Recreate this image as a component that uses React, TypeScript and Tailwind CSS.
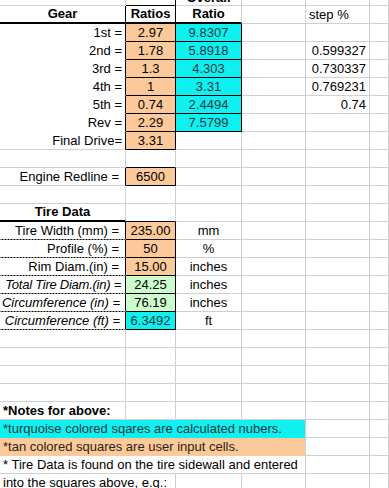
import type { ReactNode } from "react";

// right / bottom border variants for one sheet cell
const RB: Record<string, string> = {
  g: "border-r border-r-[#d0d0d0]",
  k: "border-r border-r-black",
};
const BB: Record<string, string> = {
  g: "border-b border-b-[#d0d0d0]",
  k: "border-b border-b-black",
  K: "border-b-2 border-b-black",
  n: "border-b border-b-transparent",
  d: "border-b border-b-transparent bg-[linear-gradient(90deg,#000_2px,transparent_2px)] bg-[length:3px_1px] bg-bottom bg-repeat-x bg-origin-border",
};

const TAN = "bg-[#fcca9a]";
const TURQ = "bg-[#10f0f0] text-[#17393d]";
const GREEN = "bg-[#cdfccd]";

function Cell({ r = "g", b = "g", c = "", children }: { r?: string; b?: string; c?: string; children?: ReactNode }) {
  return (
    <div className={`${RB[r]} ${BB[b]} flex items-center whitespace-nowrap px-[3px] min-w-0 ${c}`}>
      {children}
    </div>
  );
}

function Empty({ bB = "g" }: { bB?: string }) {
  return (
    <>
      <Cell />
      <Cell b={bB} />
      <Cell />
      <Cell />
      <Cell />
      <Cell />
    </>
  );
}

const GEARS = [
  { name: "1st =", ratio: "2.97", overall: "9.8307", step: "" },
  { name: "2nd =", ratio: "1.78", overall: "5.8918", step: "0.599327" },
  { name: "3rd =", ratio: "1.3", overall: "4.303", step: "0.730337" },
  { name: "4th =", ratio: "1", overall: "3.31", step: "0.769231" },
  { name: "5th =", ratio: "0.74", overall: "2.4494", step: "0.74" },
  { name: "Rev =", ratio: "2.29", overall: "7.5799", step: "" },
];

const TIRE = [
  { label: "Tire Width (mm) =", value: "235.00", unit: "mm", fill: TAN, lc: "pr-[6px]" },
  { label: "Profile (%) =", value: "50", unit: "%", fill: TAN, lc: "pr-[6px]" },
  { label: "Rim Diam.(in) =", value: "15.00", unit: "inches", fill: TAN, lc: "pr-[6px]" },
  { label: "Total Tire Diam.(in) =", value: "24.25", unit: "inches", fill: GREEN, lc: "italic pr-[4px] tracking-[-0.25px]" },
  { label: "Circumference (in) =", value: "76.19", unit: "inches", fill: GREEN, lc: "italic pr-[5px]" },
  { label: "Circumference (ft) =", value: "6.3492", unit: "ft", fill: TURQ, lc: "italic pr-[5px]" },
];

export default function App() {
  return (
    <div className="w-[389px] h-[488px] overflow-hidden bg-white text-[13px] text-black font-['Liberation_Sans',Arial,sans-serif]">
      <div className="grid grid-cols-[126px_50px_66px_64px_64px_1fr] grid-rows-[6px_repeat(27,18px)]">
        {/* row cut off at the top */}
        <Cell />
        <Cell r="k" b="k" />
        <Cell c="items-start justify-center overflow-hidden">
          <span className="-mt-[10px] leading-[15px] font-bold">Overall</span>
        </Cell>
        <Cell />
        <Cell />
        <Cell />

        {/* header */}
        <Cell r="k" b="K" c="justify-center font-bold">Gear</Cell>
        <Cell r="k" b="K" c="justify-center font-bold">Ratios</Cell>
        <Cell b="K" c="justify-center font-bold">Ratio</Cell>
        <Cell />
        <Cell>step %</Cell>
        <Cell />

        {GEARS.map((g) => (
          <>
            <Cell key={g.name} r="k" b="n" c="justify-end">{g.name}</Cell>
            <Cell r="k" b="k" c={`justify-center ${TAN}`}>{g.ratio}</Cell>
            <Cell r="k" b="k" c={`justify-center ${TURQ}`}>{g.overall}</Cell>
            <Cell />
            <Cell c="justify-end">{g.step}</Cell>
            <Cell />
          </>
        ))}

        <Cell r="k" c="justify-end">Final Drive=</Cell>
        <Cell r="k" b="k" c={`justify-center ${TAN}`}>3.31</Cell>
        <Cell />
        <Cell />
        <Cell />
        <Cell />

        <Empty bB="k" />

        <Cell r="k" c="justify-end pr-[6px]">Engine Redline =</Cell>
        <Cell r="k" b="k" c={`justify-center ${TAN}`}>6500</Cell>
        <Cell />
        <Cell />
        <Cell />
        <Cell />

        <Empty />

        <Cell b="K" c="justify-center font-bold">Tire Data</Cell>
        <Cell b="k" />
        <Cell />
        <Cell />
        <Cell />
        <Cell />

        {TIRE.map((t) => (
          <>
            <Cell key={t.label} r="k" b="d" c={`justify-end ${t.lc}`}>{t.label}</Cell>
            <Cell r="k" b="k" c={`justify-center ${t.fill}`}>{t.value}</Cell>
            <Cell c="justify-center">{t.unit}</Cell>
            <Cell />
            <Cell />
            <Cell />
          </>
        ))}

        <Empty />
        <Empty />
        <Empty />
        <Empty />

        <Cell c="font-bold">*Notes for above:</Cell>
        <Cell />
        <Cell />
        <Cell />
        <Cell />
        <Cell />

        <Cell b="n" c={`col-span-4 ${TURQ}`}>*turquoise colored sqares are calculated nubers.</Cell>
        <Cell />
        <Cell />

        <Cell b="n" c={`col-span-4 ${TAN} text-[#2a1e14]`}>*tan colored squares are user input cells.</Cell>
        <Cell />
        <Cell />

        <Cell c="col-span-4">* Tire Data is found on the tire sidewall and entered</Cell>
        <Cell />
        <Cell />

        <Cell c="col-span-2">into the squares above, e.g.:</Cell>
        <Cell />
        <Cell />
        <Cell />
        <Cell />
      </div>
    </div>
  );
}
